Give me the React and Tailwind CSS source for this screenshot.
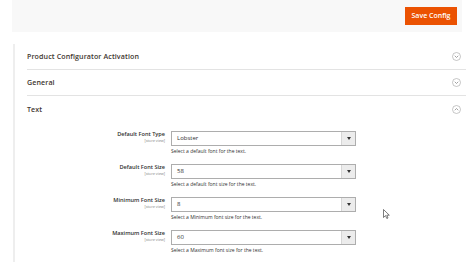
import React from 'react'

function CircleChevron({ up }) {
  return (
    <svg width="9" height="9" viewBox="0 0 18 18" className="shrink-0">
      <circle cx="9" cy="9" r="8" fill="none" stroke="#adadad" strokeWidth="1.4" />
      <path
        d={up ? 'M5.5 10.5 L9 7 L12.5 10.5' : 'M5.5 7.5 L9 11 L12.5 7.5'}
        fill="none"
        stroke="#8a8a8a"
        strokeWidth="1.6"
      />
    </svg>
  )
}

function SectionHeader({ title, open, border = true }) {
  return (
    <div
      className={
        'flex h-[26px] items-center justify-between pr-[5px] ' + (border ? 'border-b border-[#e3e3e3]' : '')
      }
    >
      <span className="text-[7.1px] font-semibold tracking-[0.1px] text-[#41362f]">{title}</span>
      <CircleChevron up={open} />
    </div>
  )
}

function Field({ label, value, hint }) {
  return (
    <div className="flex items-start">
      <div className="flex w-[144px] flex-col items-end pt-[1px] pr-[6px] leading-none">
        <span className="text-[5.6px] font-semibold text-[#303030]">{label}</span>
        <span className="mt-[1px] text-[3.8px] text-[#808080]">[store view]</span>
      </div>
      <div className="w-[185px]">
        <div className="flex h-[15px] border border-[#adadad] bg-white">
          <span className="flex flex-1 items-center pl-[5px] text-[6px] text-[#303030]">{value}</span>
          <span className="flex w-[14px] items-center justify-center border-l border-[#d6d6d6] bg-[#ececec]">
            <svg width="4" height="3" viewBox="0 0 4 3">
              <path d="M0 0 H4 L2 3 Z" fill="#333" />
            </svg>
          </span>
        </div>
        <p className="mt-[2px] text-[5px] leading-[6px] text-[#303030]">{hint}</p>
      </div>
    </div>
  )
}

export default function App() {
  return (
    <div
      className="relative h-[262px] w-[474px] overflow-hidden bg-white"
      style={{ fontFamily: '"Open Sans", "Noto Sans", sans-serif' }}
    >
      <div className="mx-[12px] flex h-[32px] justify-end bg-[#f8f8f8] pt-[7px] pr-[5px]">
        <button className="h-[18px] w-[52px] bg-[#eb5202] text-[7px] font-semibold text-white">
          Save Config
        </button>
      </div>

      <div className="mt-[12px] ml-[13px] mr-[8px] border-l-2 border-[#eeeeee] pl-[12px] pb-[20px]">
        <SectionHeader title="Product Configurator Activation" />
        <SectionHeader title="General" />
        <SectionHeader title="Text" open border={false} />

        <div className="mt-[9px] flex flex-col gap-[10px]">
          <Field label="Default Font Type" value="Lobster" hint="Select a default font for the text." />
          <Field label="Default Font Size" value="58" hint="Select a default font size for the text." />
          <Field label="Minimum Font Size" value="8" hint="Select a Minimum font size for the text." />
          <Field label="Maximum Font Size" value="60" hint="Select a Maximum font size for the text." />
        </div>
      </div>

      <svg className="absolute left-[383px] top-[209px]" width="7" height="10" viewBox="0 0 7 10">
        <path d="M0.5 0.5 V8.5 L2.5 6.6 L3.8 9.5 L5 9 L3.8 6.2 L6.3 6.2 Z" fill="#fff" stroke="#444" strokeWidth="0.7" />
      </svg>
    </div>
  )
}
